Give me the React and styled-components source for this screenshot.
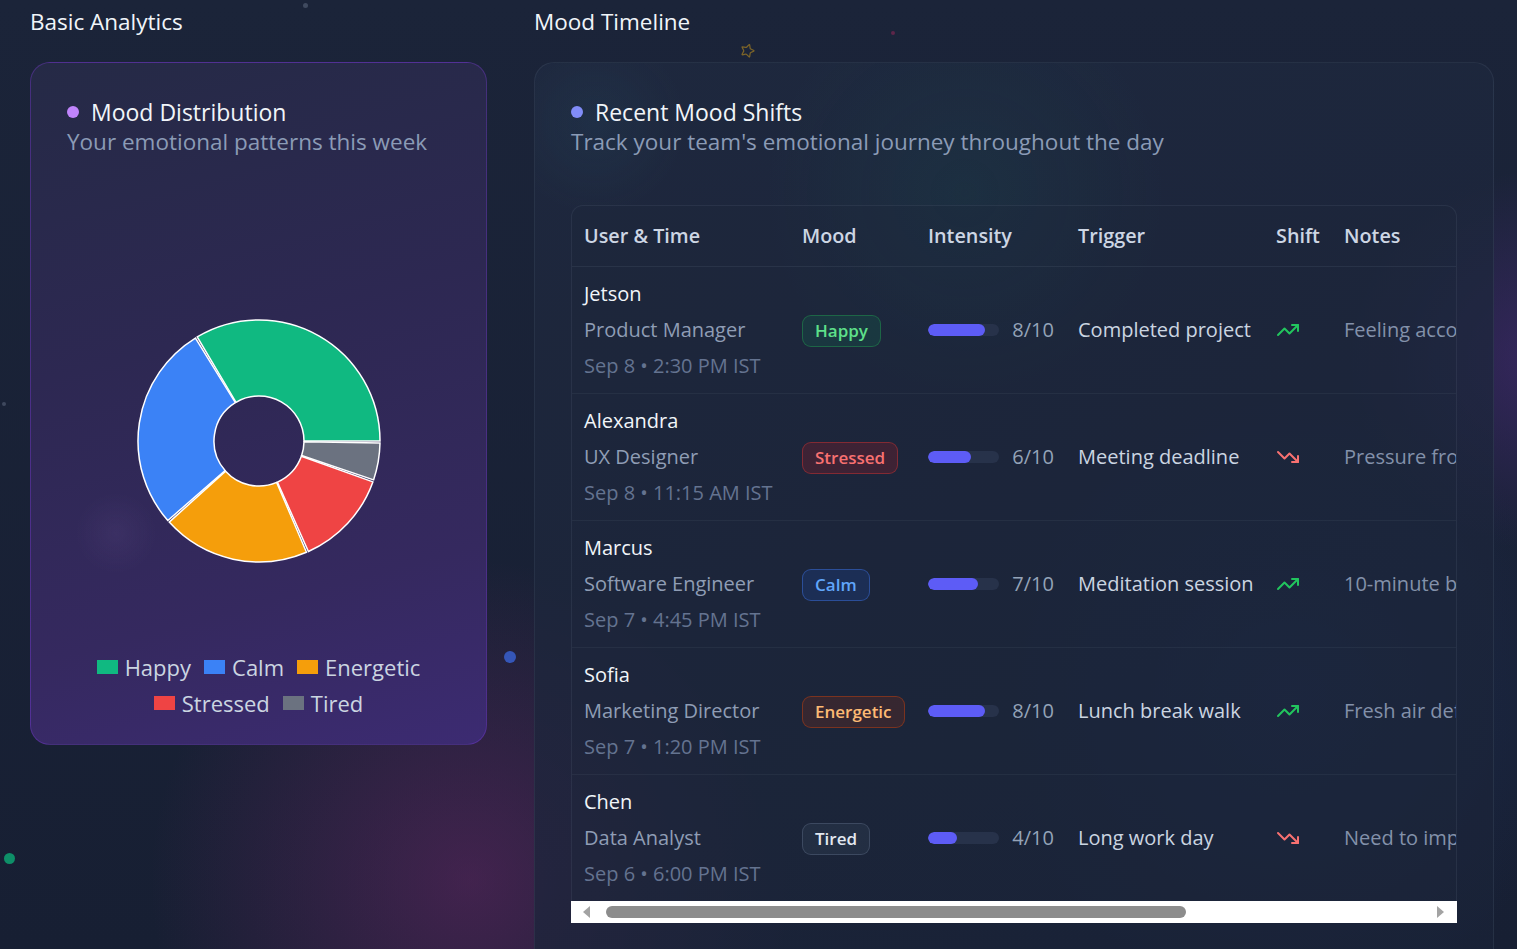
import React from 'react';
import styled, { createGlobalStyle } from 'styled-components';
import { TrendingUp, TrendingDown, Star } from 'lucide-react';

const GlobalStyle = createGlobalStyle`
  html, body {
    margin: 0;
    padding: 0;
  }
  body {
    background: #182033;
    font-family: 'Open Sans', 'Noto Sans', sans-serif;
    color: #e2e8f0;
    overflow: hidden;
  }
`;

// whole screen, two columns
const Page = styled.div`
  position: relative;
  width: 1517px;
  height: 949px;
  overflow: hidden;
  box-sizing: border-box;
  padding: 0 23px 0 30px;
  display: grid;
  grid-template-columns: 457px 960px;
  column-gap: 47px;
  align-items: start;
  background:
    radial-gradient(circle at 470px 880px, rgba(125, 40, 115, 0.42), transparent 320px),
    radial-gradient(circle at 1540px 360px, rgba(95, 45, 150, 0.4), transparent 190px),
    radial-gradient(circle at 1290px 700px, rgba(40, 75, 150, 0.25), transparent 300px),
    linear-gradient(180deg, #1b2439 0%, #171f33 100%);
`;

const Particle = styled.span`
  position: absolute;
  border-radius: 50%;
  width: ${p => p.$size}px;
  height: ${p => p.$size}px;
  background: ${p => p.$color};
  left: ${p => p.$x}px;
  top: ${p => p.$y}px;
`;

const Sparkle = styled.span`
  position: absolute;
  left: 740px;
  top: 43px;
  color: #7c6428;
  transform: rotate(18deg);
  display: flex;
`;

const Section = styled.section`
  display: flex;
  flex-direction: column;
  position: relative;
`;

const SectionTitle = styled.h2`
  margin: 7px 0 25px;
  font-size: 22.5px;
  line-height: 30px;
  font-weight: 400;
  color: #f1f5f9;
`;

const Card = styled.div`
  box-sizing: border-box;
  border-radius: 20px;
  padding: 35px 36px 36px;
  display: flex;
  flex-direction: column;
`;

const DistributionCard = styled(Card)`
  height: 683px;
  border: 1px solid rgba(126, 60, 220, 0.35);
  background:
    radial-gradient(circle at 85px 470px, rgba(140, 110, 180, 0.1), transparent 40px),
    linear-gradient(165deg, #252a46 0%, #2d2852 40%, #35295f 75%, #3c2b72 100%);
`;

const TimelineCard = styled(Card)`
  height: 920px;
  border: 1px solid rgba(148, 163, 184, 0.1);
  background:
    radial-gradient(circle at 430px 130px, rgba(20, 120, 110, 0.1), transparent 200px),
    radial-gradient(circle at 60px 60px, rgba(40, 90, 120, 0.15), transparent 90px),
    linear-gradient(160deg, rgba(32, 42, 64, 0.75) 0%, rgba(26, 35, 56, 0.75) 100%);
`;

const CardTitle = styled.div`
  display: flex;
  align-items: center;
  gap: 12px;
  font-size: 23px;
  line-height: 28px;
  color: #f1f5f9;
`;

const Dot = styled.span`
  width: 12px;
  height: 12px;
  border-radius: 50%;
  background: ${p => p.$color};
  flex: none;
`;

const CardSubtitle = styled.div`
  font-size: 22.5px;
  line-height: 32px;
  color: #8b9bb6;
`;

const ChartBox = styled.div`
  margin-top: 152px;
  display: flex;
  justify-content: center;
`;

const Legend = styled.div`
  margin-top: 77px;
  display: flex;
  flex-wrap: wrap;
  justify-content: center;
  column-gap: 13px;
  padding: 0 12px;
`;

const LegendItem = styled.div`
  display: flex;
  align-items: center;
  gap: 7px;
  font-size: 22px;
  line-height: 36px;
  color: #cbd5e1;
`;

const Swatch = styled.span`
  width: 21px;
  height: 14px;
  background: ${p => p.$color};
`;

// table
const TableFrame = styled.div`
  margin-top: 47px;
  border: 1px solid rgba(148, 163, 184, 0.1);
  border-bottom: none;
  border-radius: 12px 12px 0 0;
  background: rgba(30, 41, 59, 0.3);
  overflow: hidden;
`;

const Table = styled.table`
  width: 1237px;
  table-layout: fixed;
  border-collapse: collapse;
`;

const Th = styled.th`
  box-sizing: border-box;
  width: ${p => p.$w}px;
  padding: 17px 12px;
  text-align: left;
  font-size: 19.8px;
  line-height: 26px;
  font-weight: 600;
  color: #cdd6e4;
  white-space: nowrap;
  border-bottom: 1px solid rgba(148, 163, 184, 0.1);
`;

const Row = styled.tr`
  border-bottom: 1px solid rgba(148, 163, 184, 0.08);
  &:last-child {
    border-bottom: none;
  }
`;

const Td = styled.td`
  padding: 9px 12px;
  vertical-align: middle;
  white-space: nowrap;
  overflow: hidden;
  font-size: 20px;
  line-height: 36px;
  color: ${p => p.$color || '#cbd5e1'};
`;

const UserName = styled.div`
  color: #f1f5f9;
  font-weight: 500;
`;

const UserRole = styled.div`
  color: #8f9db5;
`;

const UserDate = styled.div`
  color: #647390;
`;

const moodStyles = {
  Happy: { bg: 'rgba(16, 120, 80, 0.22)', border: 'rgba(34, 160, 80, 0.45)', color: '#5ee08a' },
  Stressed: { bg: 'rgba(150, 30, 40, 0.28)', border: 'rgba(200, 50, 50, 0.5)', color: '#f87171' },
  Calm: { bg: 'rgba(30, 70, 150, 0.3)', border: 'rgba(59, 110, 220, 0.5)', color: '#60a5fa' },
  Energetic: { bg: 'rgba(120, 45, 30, 0.3)', border: 'rgba(170, 60, 20, 0.6)', color: '#fdba74' },
  Tired: { bg: 'rgba(51, 65, 85, 0.35)', border: 'rgba(100, 116, 139, 0.4)', color: '#e2e8f0' },
};

const MoodBadge = styled.span`
  display: inline-block;
  padding: 0 12px;
  line-height: 30px;
  border-radius: 9px;
  font-size: 17px;
  font-weight: 600;
  background: ${p => moodStyles[p.$mood].bg};
  border: 1px solid ${p => moodStyles[p.$mood].border};
  color: ${p => moodStyles[p.$mood].color};
`;

const Intensity = styled.div`
  display: flex;
  align-items: center;
  gap: 13px;
  color: #94a3b8;
`;

const Bar = styled.div`
  width: 72px;
  height: 12px;
  border-radius: 6px;
  background: #27324a;
  overflow: hidden;
`;

const BarFill = styled.div`
  height: 100%;
  border-radius: 6px;
  background: #5d5cf6;
`;

const ShiftIcon = styled.span`
  display: flex;
  color: ${p => (p.$up ? '#22c55e' : '#f87171')};
`;

// horizontal scrollbar under the table
const ScrollTrack = styled.div`
  height: 22px;
  background: #ffffff;
  display: flex;
  align-items: center;
`;

const ScrollArrow = styled.span`
  width: 30px;
  height: 22px;
  flex: none;
  display: flex;
  align-items: center;
  justify-content: ${p => (p.$dir === 'left' ? 'flex-start' : 'flex-end')};
  padding: ${p => (p.$dir === 'left' ? '0 0 0 12px' : '0 13px 0 0')};
  box-sizing: border-box;
  &::before {
    content: '';
    border-top: 6px solid transparent;
    border-bottom: 6px solid transparent;
    ${p => (p.$dir === 'left' ? 'border-right: 7px solid #a3a3a3;' : 'border-left: 7px solid #a3a3a3;')}
  }
`;

const ScrollLane = styled.div`
  flex: 1;
  height: 12px;
  display: flex;
`;

const ScrollThumb = styled.div`
  height: 12px;
  border-radius: 6px;
  background: #8c8c8c;
  margin-left: 5px;
`;

const moods = [
  { name: 'Happy', value: 34, color: '#10b981' },
  { name: 'Calm', value: 28, color: '#3b82f6' },
  { name: 'Energetic', value: 20, color: '#f59e0b' },
  { name: 'Stressed', value: 13, color: '#ef4444' },
  { name: 'Tired', value: 5, color: '#6b7280' },
];

const shifts = [
  { user: 'Jetson', role: 'Product Manager', date: 'Sep 8 • 2:30 PM IST', mood: 'Happy', level: 8, trigger: 'Completed project', up: true, notes: 'Feeling accomplished after shipping the release' },
  { user: 'Alexandra', role: 'UX Designer', date: 'Sep 8 • 11:15 AM IST', mood: 'Stressed', level: 6, trigger: 'Meeting deadline', up: false, notes: 'Pressure from the client review tomorrow' },
  { user: 'Marcus', role: 'Software Engineer', date: 'Sep 7 • 4:45 PM IST', mood: 'Calm', level: 7, trigger: 'Meditation session', up: true, notes: '10-minute break helped me reset my focus' },
  { user: 'Sofia', role: 'Marketing Director', date: 'Sep 7 • 1:20 PM IST', mood: 'Energetic', level: 8, trigger: 'Lunch break walk', up: true, notes: 'Fresh air definitely boosted my energy' },
  { user: 'Chen', role: 'Data Analyst', date: 'Sep 6 • 6:00 PM IST', mood: 'Tired', level: 4, trigger: 'Long work day', up: false, notes: 'Need to improve my work-life balance' },
];

const columns = [
  { label: 'User & Time', w: 218 },
  { label: 'Mood', w: 126 },
  { label: 'Intensity', w: 150 },
  { label: 'Trigger', w: 198 },
  { label: 'Shift', w: 68 },
  { label: 'Notes', w: 477 },
];

const polar = (cx, cy, r, deg) => {
  const a = (deg * Math.PI) / 180;
  return [cx + r * Math.cos(a), cy - r * Math.sin(a)];
};

const arcPath = (cx, cy, r0, r1, start, end) => {
  const large = end - start > 180 ? 1 : 0;
  const [x1, y1] = polar(cx, cy, r1, start);
  const [x2, y2] = polar(cx, cy, r1, end);
  const [x3, y3] = polar(cx, cy, r0, end);
  const [x4, y4] = polar(cx, cy, r0, start);
  return `M${x1} ${y1} A${r1} ${r1} 0 ${large} 0 ${x2} ${y2} L${x3} ${y3} A${r0} ${r0} 0 ${large} 1 ${x4} ${y4} Z`;
};

const Donut = ({ data }) => {
  const pad = 1;
  const total = data.reduce((s, d) => s + d.value, 0);
  const free = 360 - pad * data.length;
  let angle = 0;
  return (
    <svg width="262" height="262" viewBox="0 0 262 262">
      {data.map(d => {
        const sweep = (d.value / total) * free;
        const path = arcPath(131, 131, 45, 121, angle, angle + sweep);
        angle += sweep + pad;
        return <path key={d.name} d={path} fill={d.color} stroke="#ffffff" strokeWidth="1.5" />;
      })}
    </svg>
  );
};

const tableWidth = columns.reduce((s, c) => s + c.w, 0);
const visibleWidth = 885;

const App = () => (
  <>
    <GlobalStyle />
    <Page>
      <Particle $size={5} $color="rgba(148,163,184,0.3)" $x={303} $y={3} />
      <Particle $size={4} $color="rgba(160,40,90,0.5)" $x={891} $y={31} />
      <Particle $size={4} $color="rgba(148,163,184,0.3)" $x={2} $y={402} />
      <Particle $size={12} $color="#3556b8" $x={504} $y={651} />
      <Particle $size={11} $color="#0e8f68" $x={4} $y={853} />
      <Sparkle>
        <Star size={15} strokeWidth={2} />
      </Sparkle>

      <Section>
        <SectionTitle>Basic Analytics</SectionTitle>
        <DistributionCard>
          <CardTitle>
            <Dot $color="#c084fc" />
            Mood Distribution
          </CardTitle>
          <CardSubtitle>Your emotional patterns this week</CardSubtitle>
          <ChartBox>
            <Donut data={moods} />
          </ChartBox>
          <Legend>
            {moods.map(m => (
              <LegendItem key={m.name}>
                <Swatch $color={m.color} />
                {m.name}
              </LegendItem>
            ))}
          </Legend>
        </DistributionCard>
      </Section>

      <Section>
        <SectionTitle>Mood Timeline</SectionTitle>
        <TimelineCard>
          <CardTitle>
            <Dot $color="#818cf8" />
            Recent Mood Shifts
          </CardTitle>
          <CardSubtitle>Track your team's emotional journey throughout the day</CardSubtitle>
          <TableFrame>
            <Table>
              <thead>
                <tr>
                  {columns.map(c => (
                    <Th key={c.label} $w={c.w}>{c.label}</Th>
                  ))}
                </tr>
              </thead>
              <tbody>
                {shifts.map(s => (
                  <Row key={s.user}>
                    <Td>
                      <UserName>{s.user}</UserName>
                      <UserRole>{s.role}</UserRole>
                      <UserDate>{s.date}</UserDate>
                    </Td>
                    <Td>
                      <MoodBadge $mood={s.mood}>{s.mood}</MoodBadge>
                    </Td>
                    <Td>
                      <Intensity>
                        <Bar>
                          <BarFill style={{ width: `${s.level * 10}%` }} />
                        </Bar>
                        {s.level}/10
                      </Intensity>
                    </Td>
                    <Td>{s.trigger}</Td>
                    <Td>
                      <ShiftIcon $up={s.up}>
                        {s.up ? <TrendingUp size={24} /> : <TrendingDown size={24} />}
                      </ShiftIcon>
                    </Td>
                    <Td $color="#8391aa">{s.notes}</Td>
                  </Row>
                ))}
              </tbody>
            </Table>
          </TableFrame>
          <ScrollTrack>
            <ScrollArrow $dir="left" />
            <ScrollLane>
              <ScrollThumb style={{ width: `${((visibleWidth / tableWidth) * 825 - 10).toFixed(0)}px` }} />
            </ScrollLane>
            <ScrollArrow $dir="right" />
          </ScrollTrack>
        </TimelineCard>
      </Section>
    </Page>
  </>
);

export default App;
